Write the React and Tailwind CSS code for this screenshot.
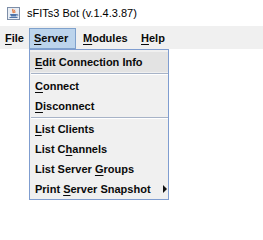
const font = { fontFamily: '"Liberation Sans", Arial, sans-serif' };

function U({ children }) {
  return <span className="underline underline-offset-2">{children}</span>;
}

function JavaIcon() {
  return (
    <svg width="13" height="13" viewBox="0 0 13 13">
      <rect x="0.5" y="0.5" width="12" height="12" fill="#e9eef5" stroke="#7d8ea8" />
      <path d="M6 2 C5 3.5 7 4.5 6 6" stroke="#e2621b" strokeWidth="1.2" fill="none" />
      <path d="M7.8 2.8 C7 4 8.6 4.6 7.6 6" stroke="#e2621b" strokeWidth="1" fill="none" />
      <path d="M3 7 L10 7 L9 9.5 L4 9.5 Z" fill="#4f74a8" />
      <path d="M10 7.3 C11.5 7.3 11.5 9 9.5 9" stroke="#4f74a8" strokeWidth="0.8" fill="none" />
      <rect x="2.5" y="10" width="8" height="1" fill="#4f74a8" />
    </svg>
  );
}

function Item({ children, active, arrow }) {
  return (
    <div
      className={
        'h-[20px] flex items-center pl-[5px] pr-[1px] ' +
        (active ? 'bg-[#e3e3e3]' : '')
      }
    >
      <span className="flex-1">{children}</span>
      {arrow && (
        <svg width="4" height="8" viewBox="0 0 4 8">
          <path d="M0 0 L4 4 L0 8 Z" fill="#111" />
        </svg>
      )}
    </div>
  );
}

function Sep({ h }) {
  return (
    <div className={h === 4 ? 'h-[4px] pt-[1px]' : 'h-[3px] pt-[1px]'}>
      <div className="h-[1px] bg-[#a7b3c7] ml-[1px]" />
      <div className="h-[1px] bg-white ml-[1px]" />
    </div>
  );
}

export default function App() {
  return (
    <div className="relative w-[263px] h-[240px] bg-white overflow-hidden text-[11px] text-[#0a0a0a]" style={font}>
      <div className="h-[26px] flex items-center pl-[7px] gap-[7px]">
        <JavaIcon />
        <span className="text-[11px] text-black">sFITs3 Bot (v.1.4.3.87)</span>
      </div>
      <div className="h-[23px] bg-[#f0f0f0] pt-[2px] flex font-bold">
        <div className="w-[29px] h-[21px] pl-[5px] flex items-center"><U>F</U>ile</div>
        <div className="w-[47px] h-[21px] pl-[4px] flex items-center border border-[#7fa1cc] bg-[#bcd4ec]"><U>S</U>erver</div>
        <div className="w-[59px] h-[21px] pl-[7px] flex items-center"><U>M</U>odules</div>
        <div className="w-[40px] h-[21px] pl-[6px] flex items-center"><U>H</U>elp</div>
      </div>
      <div className="absolute left-[29px] top-[49px] w-[140px] h-[151px] bg-[#f0f0f0] border border-[#7f9dd0] pt-[2px] font-bold">
        <Item active><U>E</U>dit Connection Info</Item>
        <Sep h={4} />
        <Item><U>C</U>onnect</Item>
        <Item><U>D</U>isconnect</Item>
        <Sep h={3} />
        <Item><U>L</U>ist Clients</Item>
        <Item>List C<U>h</U>annels</Item>
        <Item>List Server <U>G</U>roups</Item>
        <Item arrow>Print <U>S</U>erver Snapshot</Item>
      </div>
    </div>
  );
}
